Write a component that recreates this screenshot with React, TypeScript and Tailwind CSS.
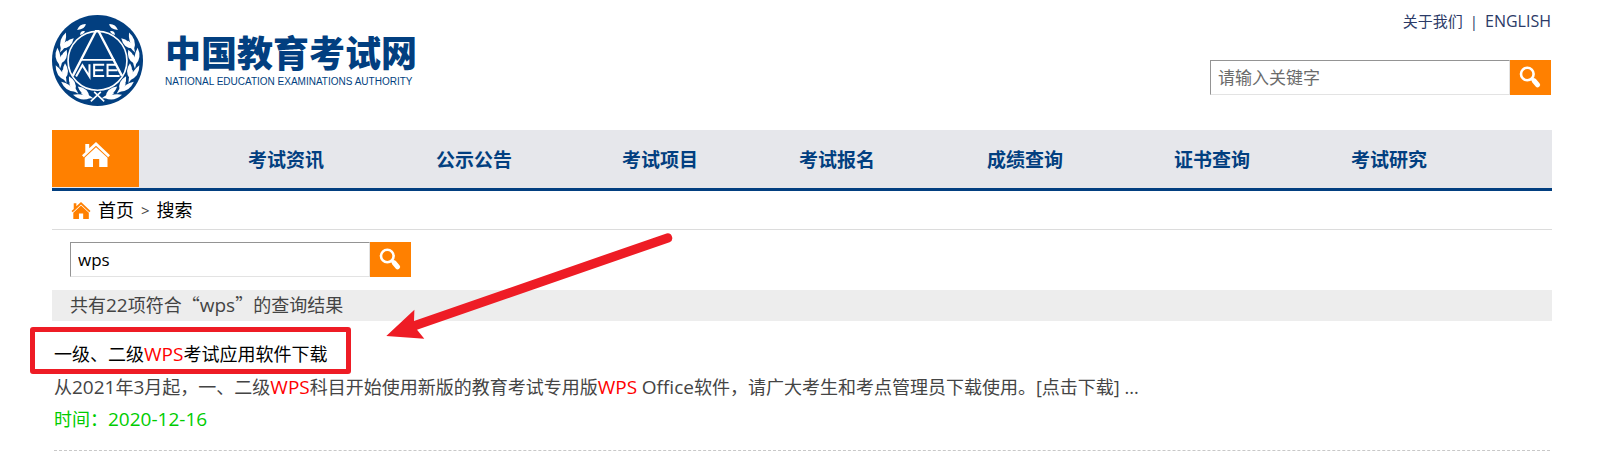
import React, { useState } from 'react';

const navItems = ['考试资讯', '公示公告', '考试项目', '考试报名', '成绩查询', '证书查询', '考试研究'];

// angles (degrees from the bottom of the emblem) at which the laurel leaves sit
const leafAngles = [18, 42, 66, 90, 114];

const LaurelBranch: React.FC = () => (
  <g>
    {leafAngles.map((angle) => (
      <g key={angle} transform={`rotate(${angle} 136 136)`}>
        <path d="M150 249 Q128 270 98 256 Q122 242 150 249Z" />
        <path d="M146 246 Q120 250 104 228 Q134 222 146 246Z" />
        <path d="M160 248 Q136 256 118 243 Q138 238 160 248Z" />
      </g>
    ))}
    <path d="M75 45 Q82 26 101 27 Q100 42 75 45Z" />
    <path d="M84 60 Q84 46 98 48 Q98 56 84 60Z" />
  </g>
);

const Emblem: React.FC = () => (
  <svg viewBox="0 0 272 272" className="h-[91px] w-[91px] shrink-0" aria-hidden="true">
    <circle cx="136" cy="136" r="136" fill="#023f80" />
    <g fill="#fff">
      <LaurelBranch />
      <g transform="matrix(-1 0 0 1 272 0)">
        <LaurelBranch />
      </g>
    </g>
    <circle cx="136" cy="137" r="88" fill="#023f80" stroke="#fff" strokeWidth="5" />
    <g fill="none" stroke="#fff" strokeWidth="6">
      <path d="M116 258 L146 230 M156 258 L126 230" strokeWidth="5" />
      <path d="M62 182 L131 48 H139 L209 182" strokeWidth="7" />
      <path d="M84 134 H188" strokeWidth="5" />
      <path d="M72 184 L91 150 L112 184 V147" />
      <path d="M156 149 H126 V182 H156 M126 165 H153" />
      <path d="M194 149 H166 V182 H202 M166 165 H196" />
    </g>
  </svg>
);

const SearchIcon: React.FC = () => (
  <svg viewBox="0 0 41 35" className="h-[35px] w-[41px]" fill="none" stroke="#fff" aria-hidden="true">
    <circle cx="17.3" cy="14" r="6.3" strokeWidth="2.6" />
    <path d="M21.5 18.5 L24 20.5" strokeWidth="3.5" />
    <path d="M24.2 20.8 L27.6 24.8" strokeWidth="5" strokeLinecap="round" />
  </svg>
);

const HomeIcon: React.FC<{ className: string }> = ({ className }) => (
  <svg viewBox="0 0 28 25" className={className} fill="currentColor" aria-hidden="true">
    <path d="M0 13.2 L3.3 10.2 V2 H7.2 V6.2 L14 0 L28 13.2 L26.2 15.2 L14 3.8 L1.8 15.2Z" />
    <path d="M14 5.2 L25.5 15.8 V25 H17.2 V17 H11 V25 H2.7 V15.8Z" />
  </svg>
);

interface SearchBoxProps {
  label: string;
  initial?: string;
  placeholder?: string;
}

const SearchBox: React.FC<SearchBoxProps> = ({ label, initial = '', placeholder }) => {
  const [value, setValue] = useState(initial);

  return (
    <form className="flex h-[35px]" onSubmit={(e) => e.preventDefault()}>
      <input
        type="text"
        aria-label={label}
        value={value}
        placeholder={placeholder}
        onChange={(e) => setValue(e.target.value)}
        className="w-[300px] border border-t-[#949494] border-l-[#949494] border-r-[#e3e3e3] border-b-[#e3e3e3] bg-white px-[7px] text-[17px] text-black outline-none placeholder:text-[#6b6b6b]"
      />
      <button type="submit" aria-label={label} className="w-[41px] bg-[#ff8000]">
        <SearchIcon />
      </button>
    </form>
  );
};

const Keyword: React.FC<{ children: React.ReactNode }> = ({ children }) => (
  <em className="text-[19px] not-italic text-[#ff0000]">{children}</em>
);

// latin letters and digits run a little larger than the Chinese text
const Latin: React.FC<{ children: React.ReactNode }> = ({ children }) => (
  <span className="text-[19px]">{children}</span>
);

const App: React.FC = () => {
  return (
    <div className="relative bg-white pr-[58px] pl-[52px] font-['Open_Sans','Noto_Sans_CJK_SC',sans-serif] text-[18px] text-[#444]">
      <header className="flex h-[130px] justify-between">
        <a href="#" className="flex items-start gap-[22px] pt-[15px] text-[#023f80]">
          <Emblem />
          <span className="flex flex-col pt-[16px]">
            <span className="font-['Noto_Sans_CJK_SC',sans-serif] text-[36px] leading-[40px] font-black">中国教育考试网</span>
            <span className="pt-[4px] font-['Liberation_Sans',sans-serif] text-[10px] leading-[14px]">
              NATIONAL EDUCATION EXAMINATIONS AUTHORITY
            </span>
          </span>
        </a>
        <div className="flex flex-col items-end gap-[28px] pt-[11px] pr-px">
          <div className="flex text-[15px] leading-[21px] text-[#2b3a67]">
            <a href="#">关于我们</a>
            <span className="px-[7px]">|</span>
            <a href="#" className="text-[16px]">ENGLISH</a>
          </div>
          <SearchBox label="站内搜索" placeholder="请输入关键字" />
        </div>
      </header>

      <nav className="flex h-[61px] border-b-[3px] border-[#023f80] bg-[#e6e7eb]">
        <a href="#" aria-label="首页" className="mb-px flex w-[87px] shrink-0 justify-center bg-[#ff8000] pt-[12px] text-white">
          <HomeIcon className="h-[25px] w-[28px]" />
        </a>
        <ul className="grid flex-1 grid-cols-[188fr_186fr_177fr_188fr_187fr_177fr_201fr] items-center pt-[2px] pl-[109px] text-[19px] font-bold text-[#023f80]">
          {navItems.map((item) => (
            <li key={item}>
              <a href="#">{item}</a>
            </li>
          ))}
        </ul>
      </nav>

      <div className="flex h-[39px] items-center border-b border-[#dcdcdc] pl-[18px] text-black">
        <HomeIcon className="mr-[6px] h-[17px] w-[22px] text-[#ff8000]" />
        <a href="#">首页</a>
        <span className="px-[7px] text-[15px] text-[#444]">&gt;</span>
        <a href="#">搜索</a>
      </div>

      <main>
        <div className="py-[12px] pl-[18px]">
          <SearchBox label="搜索" initial="wps" />
        </div>
        <p className="mt-px h-[31px] bg-[#ededed] pl-[18px] leading-[29px]">
          共有<Latin>22</Latin>项符合<span className="font-['Noto_Sans_CJK_SC',sans-serif]">“</span>
          <Latin>wps</Latin>
          <span className="font-['Noto_Sans_CJK_SC',sans-serif]">”</span>的查询结果
        </p>
        <article className="mx-[2px] border-b border-dashed border-[#c8c8c8] pt-[17px] pb-[15px] leading-[32px]">
          <h2 className="relative mb-px text-black">
            <a href="#">
              一级、二级<Keyword>WPS</Keyword>考试应用软件下载
            </a>
            <span className="pointer-events-none absolute -top-[11px] -left-[24px] h-[47px] w-[321px] rounded-[3px] border-[5px] border-[#ee1c25]" />
          </h2>
          <p>
            从<Latin>2021</Latin>年<Latin>3</Latin>月起，一、二级<Keyword>WPS</Keyword>科目开始使用新版的教育考试专用版<Keyword>WPS</Keyword> <Latin>Office</Latin>软件，请广大考生和考点管理员下载使用。[点击下载] ...
          </p>
          <p className="text-[#00cc00]">
            时间：<time dateTime="2020-12-16" className="text-[19px]">2020-12-16</time>
          </p>
        </article>
      </main>

      <svg
        viewBox="386 232 288 108"
        className="pointer-events-none absolute top-[232px] left-[386px] h-[108px] w-[288px]"
        fill="#ee1c25"
        aria-hidden="true"
      >
        <path d="M386.3 336 L414.4 309.7 L414 321 L666.5 233.4 A4.7 4.7 0 0 1 669.6 242.2 L417 329.8 L424.3 338.7Z" />
      </svg>
    </div>
  );
};

export default App;
